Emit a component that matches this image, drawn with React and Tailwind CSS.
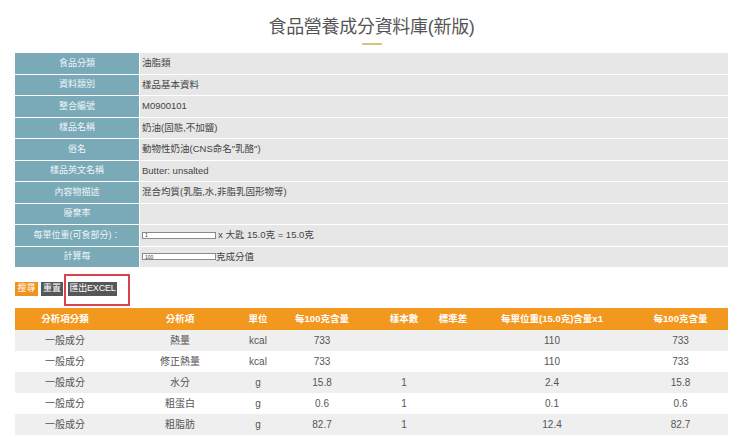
import React from "react";

const font = { fontFamily: '"Liberation Sans", "Noto Sans CJK TC", sans-serif' };

const infoRows = [
  { label: "食品分類", value: "油脂類" },
  { label: "資料類別", value: "樣品基本資料" },
  { label: "整合編號", value: "M0900101" },
  { label: "樣品名稱", value: "奶油(固態,不加鹽)" },
  { label: "俗名", value: "動物性奶油(CNS命名\"乳酪\")" },
  { label: "樣品英文名稱", value: "Butter: unsalted" },
  { label: "內容物描述", value: "混合均質(乳脂,水,非脂乳固形物等)" },
  { label: "廢棄率", value: "" },
  { label: "每單位重(可食部分)：", value: "unit" },
  { label: "計算每", value: "per" },
];

const headers = [
  "分析項分類",
  "分析項",
  "單位",
  "每100克含量",
  "樣本數",
  "標準差",
  "每單位重(15.0克)含量x1",
  "每100克含量",
];

const colWidths = ["w-[100px]", "w-[130px]", "w-[26px]", "w-[102px]", "w-[62px]", "w-[36px]", "w-[162px]", "w-[95px]"];

const nutrients = [
  ["一般成分", "熱量", "kcal", "733", "", "", "110", "733"],
  ["一般成分", "修正熱量", "kcal", "733", "", "", "110", "733"],
  ["一般成分", "水分", "g", "15.8", "1", "", "2.4", "15.8"],
  ["一般成分", "粗蛋白", "g", "0.6", "1", "", "0.1", "0.6"],
  ["一般成分", "粗脂肪", "g", "82.7", "1", "", "12.4", "82.7"],
];

function SmallInput({ value }) {
  return (
    <input
      readOnly
      value={value}
      className="w-[74px] h-[7px] bg-white border border-[#8a8a8a] text-[5px] leading-[5px] px-[2px] text-[#333] outline-none"
    />
  );
}

function InfoValue({ row }) {
  if (row.value === "unit") {
    return (
      <div className="flex items-center">
        <SmallInput value="1" />
        <span className="ml-[2px]">x 大匙 15.0克 = 15.0克</span>
      </div>
    );
  }
  if (row.value === "per") {
    return (
      <div className="flex items-center">
        <SmallInput value="100" />
        <span>克成分值</span>
      </div>
    );
  }
  return <span>{row.value}</span>;
}

export default function App() {
  return (
    <div className="w-[740px] h-[446px] bg-white overflow-hidden" style={font}>
      <div className="pl-[15px] w-[728px]">
        <div className="pt-[16px] flex flex-col items-center">
          <h1 className="text-[18px] leading-[22px] text-[#555555] tracking-[-0.3px]">食品營養成分資料庫(新版)</h1>
          <div className="mt-[5px] w-[20px] h-[2px] bg-[#d7c27a]" />
        </div>

        <div className="mt-[8px] flex flex-col gap-px">
          {infoRows.map((row) => (
            <div key={row.label} className="flex gap-px h-[20.5px]">
              <div className="w-[124px] shrink-0 bg-[#7aaab7] text-[#eef5f7] text-[9px] flex items-center justify-center">
                {row.label}
              </div>
              <div className="flex-1 bg-[#e7e7e7] text-[#444] text-[9.5px] flex items-center pl-[2px]">
                <InfoValue row={row} />
              </div>
            </div>
          ))}
        </div>

        <div className="mt-[15px] flex items-center text-[9px] text-white whitespace-nowrap">
          <button className="h-[14px] w-[23px] bg-[#f0931e] flex items-center justify-center">搜尋</button>
          <button className="ml-[3px] h-[14px] w-[22px] bg-[#575757] flex items-center justify-center">重置</button>
          <span className="relative ml-[5px]">
            <button className="h-[14px] w-[49px] bg-[#575757] flex items-center justify-center tracking-[-0.2px]">
              匯出EXCEL
            </button>
            <span className="absolute left-[-4px] top-[-8px] w-[66px] h-[32px] border-2 border-[#d9434f]" />
          </span>
        </div>

        <table className="mt-[12px] w-[713px] table-fixed border-collapse text-center">
          <colgroup>
            {colWidths.map((w, i) => (
              <col key={i} className={w} />
            ))}
          </colgroup>
          <thead>
            <tr className="bg-[#f3981f] h-[22px]">
              {headers.map((h, i) => (
                <th key={i} className="text-[9.5px] font-semibold text-white whitespace-nowrap p-0">
                  {h}
                </th>
              ))}
            </tr>
          </thead>
          <tbody>
            {nutrients.map((r, i) => (
              <tr key={i} className={`h-[21px] ${i % 2 === 0 ? "bg-[#efefef]" : "bg-white"}`}>
                {r.map((c, j) => (
                  <td key={j} className="text-[10px] text-[#555] p-0 whitespace-nowrap">
                    {c}
                  </td>
                ))}
              </tr>
            ))}
          </tbody>
        </table>
      </div>
    </div>
  );
}
